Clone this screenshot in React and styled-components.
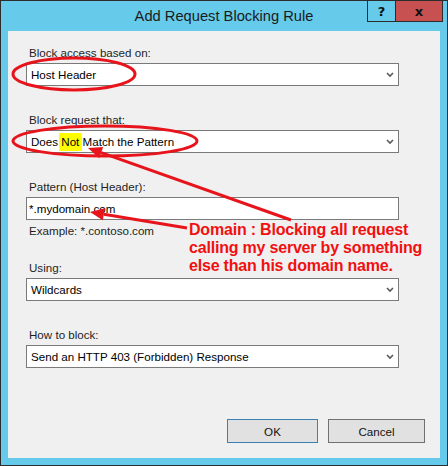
import React from 'react';
import styled, { createGlobalStyle } from 'styled-components';

const GlobalStyle = createGlobalStyle`
  html, body { margin: 0; padding: 0; background: #ffffff; }
  body { font-family: "Liberation Sans", Arial, sans-serif; }
`;

const Window = styled.div`
  position: relative;
  width: 448px;
  height: 466px;
  box-sizing: border-box;
  border: 1px solid #2d2d2d;
  background: #66caea;
  display: flex;
  flex-direction: column;
`;

const TitleBar = styled.div`
  height: 30px;
  flex: none;
  display: grid;
  grid-template-columns: 1fr auto 1fr;
  align-items: start;
`;

const Title = styled.div`
  grid-column: 2;
  font-size: 14.7px;
  line-height: 30px;
  color: #1b1b1b;
  white-space: nowrap;
`;

const Caption = styled.div`
  grid-column: 3;
  justify-self: end;
  margin: -1px 4px 0 0;
  display: flex;
  box-sizing: border-box;
  height: 22px;
  border: 1px solid #2b2b2b;
`;

const CaptionButton = styled.div`
  width: ${p => p.$w}px;
  background: ${p => (p.$close ? '#c75050' : '#66caea')};
  border-left: ${p => (p.$close ? '1px solid #2b2b2b' : 'none')};
  display: flex;
  align-items: center;
  justify-content: center;
  font-family: "DejaVu Sans", sans-serif;
  font-weight: bold;
  font-size: 13px;
  color: #111;
`;

const Body = styled.div`
  flex: 1;
  margin: 0 7px 7px;
  background: #f0f0f0;
  display: flex;
  flex-direction: column;
  padding: 14px 15px 15px 18px;
`;

const Fields = styled.div`
  width: 373px;
  display: flex;
  flex-direction: column;
`;

const Group = styled.div`
  display: flex;
  flex-direction: column;
  margin-bottom: ${p => p.$gap ?? 26}px;
`;

const Label = styled.div`
  font-size: 11.6px;
  line-height: 16px;
  margin: 0 0 2px 3px;
  color: #1e1e1e;
`;

const Hint = styled.div`
  font-size: 11.6px;
  line-height: 16px;
  margin: 3px 0 0 3px;
  color: #1e1e1e;
`;

const Box = styled.div`
  height: 23px;
  box-sizing: border-box;
  border: 1px solid #7a7a7a;
  background: #ffffff;
  display: flex;
  align-items: center;
  justify-content: space-between;
  padding: 0 4px 0 ${p => (p.$input ? 2 : 4)}px;
  font-size: 11.6px;
  color: #000;
`;

const Mark = styled.span`
  background: #ffff00;
  padding: 2px 3px 3px 2px;
  margin: 0 -3px 0 -2px;
`;

const Buttons = styled.div`
  margin-top: auto;
  display: flex;
  justify-content: flex-end;
  gap: 10px;
`;

const Button = styled.div`
  width: ${p => p.$w}px;
  height: 24px;
  box-sizing: border-box;
  border: 1px solid ${p => (p.$primary ? '#3c7fb1' : '#707070')};
  background: #e1e1e1;
  display: flex;
  align-items: center;
  justify-content: center;
  font-size: 11.6px;
  color: #111;
`;

const Overlay = styled.svg`
  position: absolute;
  top: -1px;
  left: -1px;
  pointer-events: none;
`;

const Note = styled.div`
  position: absolute;
  left: 188px;
  top: 220px;
  font-size: 16px;
  font-weight: bold;
  line-height: 18px;
  letter-spacing: -0.2px;
  color: #f01010;
  white-space: nowrap;
`;

const Chevron = () => (
  <svg width="8" height="6" viewBox="0 0 8 6">
    <polyline points="1,1 4,4 7,1" fill="none" stroke="#5a5a5a" strokeWidth="1.6" />
  </svg>
);

const Select = ({ children }) => (
  <Box>
    <span>{children}</span>
    <Chevron />
  </Box>
);

const Arrow = ({ from, to }) => {
  const [x1, y1] = from;
  const [x2, y2] = to;
  const len = Math.hypot(x2 - x1, y2 - y1);
  const ux = (x2 - x1) / len;
  const uy = (y2 - y1) / len;
  const bx = x2 - ux * 14;
  const by = y2 - uy * 14;
  const head = `${x2},${y2} ${bx - uy * 6},${by + ux * 6} ${bx + uy * 6},${by - ux * 6}`;
  return (
    <g>
      <line x1={x1} y1={y1} x2={bx} y2={by} stroke="#e8141c" strokeWidth="3" />
      <polygon points={head} fill="#e8141c" />
    </g>
  );
};

export default function App() {
  return (
    <>
      <GlobalStyle />
      <Window>
        <TitleBar>
          <Title>Add Request Blocking Rule</Title>
          <Caption>
            <CaptionButton $w={27}>?</CaptionButton>
            <CaptionButton $w={46} $close>x</CaptionButton>
          </Caption>
        </TitleBar>
        <Body>
          <Fields>
            <Group>
              <Label>Block access based on:</Label>
              <Select>Host Header</Select>
            </Group>
            <Group>
              <Label>Block request that:</Label>
              <Select>Does <Mark>Not</Mark> Match the Pattern</Select>
            </Group>
            <Group $gap={21}>
              <Label>Pattern (Host Header):</Label>
              <Box $input>*.mydomain.com</Box>
              <Hint>Example: *.contoso.com</Hint>
            </Group>
            <Group>
              <Label>Using:</Label>
              <Select>Wildcards</Select>
            </Group>
            <Group $gap={0}>
              <Label>How to block:</Label>
              <Select>Send an HTTP 403 (Forbidden) Response</Select>
            </Group>
          </Fields>
          <Buttons>
            <Button $w={91} $primary>OK</Button>
            <Button $w={97}>Cancel</Button>
          </Buttons>
        </Body>
        <Overlay width="448" height="466" viewBox="0 0 448 466">
          <ellipse cx="74" cy="74" rx="61" ry="16" fill="none" stroke="#e8141c" strokeWidth="3" />
          <ellipse cx="105" cy="141" rx="92" ry="15" fill="none" stroke="#e8141c" strokeWidth="3" />
          <Arrow from={[291, 220]} to={[88, 148]} />
          <Arrow from={[187, 228]} to={[90, 212]} />
        </Overlay>
        <Note>
          Domain : Blocking all request
          <br />
          calling my server by something
          <br />
          else than his domain name.
        </Note>
      </Window>
    </>
  );
}
